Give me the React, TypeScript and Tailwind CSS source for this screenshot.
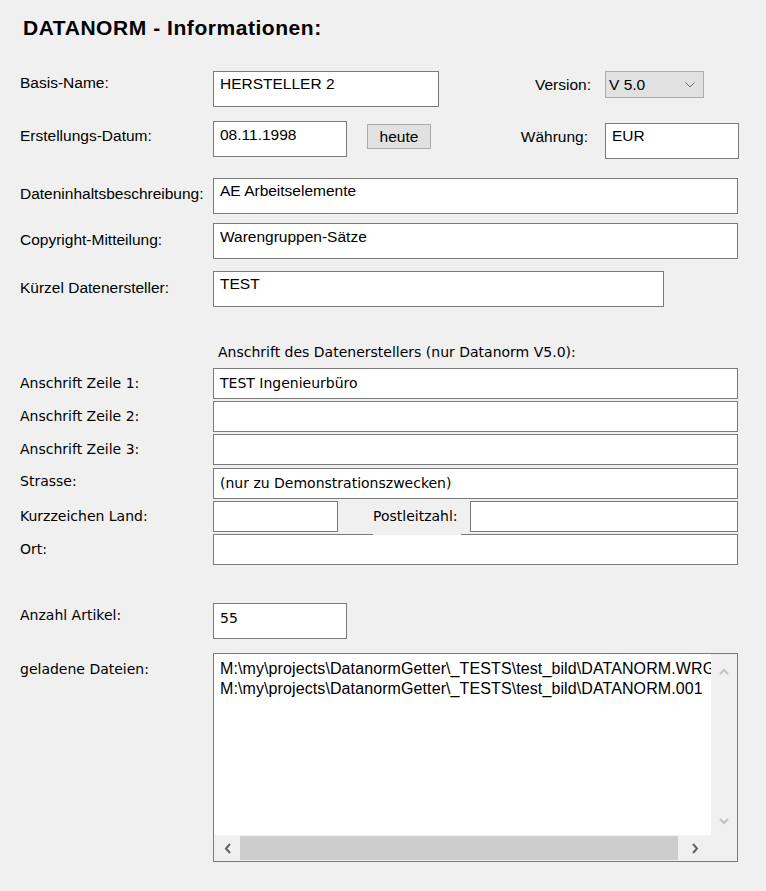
import React from 'react';

const sans = "font-['Liberation_Sans',Arial,sans-serif]";
const tahoma = "font-['DejaVu_Sans',Verdana,sans-serif]";

function Box({ w, h, text, pt = 3, className = '', children }: { w: number; h: number; text?: string; pt?: number; className?: string; children?: React.ReactNode }) {
  return (
    <div
      className={`relative shrink-0 border border-[#7a7a7a] bg-white pl-[6px] text-black whitespace-nowrap ${className}`}
      style={{ width: w, height: h, paddingTop: pt }}
    >
      {text}
      {children}
    </div>
  );
}

function Label({ pt = 0, className = '', children }: { pt?: number; className?: string; children: React.ReactNode }) {
  return (
    <div className={`w-[213px] shrink-0 pl-[20px] whitespace-nowrap ${className}`} style={{ paddingTop: pt }}>
      {children}
    </div>
  );
}

function Chevron({ dir, color, className = '' }: { dir: 'up' | 'down' | 'left' | 'right'; color: string; className?: string }) {
  const pts = {
    up: '1,6 5,2 9,6',
    down: '1,2 5,6 9,2',
    left: '6,1 2,5.5 6,10',
    right: '2,1 6,5.5 2,10',
  }[dir];
  const vb = dir === 'up' || dir === 'down' ? '0 0 10 8' : '0 0 8 11';
  const size = dir === 'up' || dir === 'down' ? 'w-[10px] h-[8px]' : 'w-[8px] h-[11px]';
  return (
    <svg viewBox={vb} className={`${size} ${className}`}>
      <polyline points={pts} fill="none" stroke={color} strokeWidth="2" />
    </svg>
  );
}

export default function App() {
  return (
    <div className={`w-[766px] h-[891px] bg-[#f0f0f0] overflow-hidden text-black ${sans}`}>
      <h1 className="pl-[23px] pt-[16px] text-[21px] leading-[24px] font-bold tracking-[0.55px]">
        DATANORM - Informationen:
      </h1>

      {/* obere Felder */}
      <div className="text-[15.5px] leading-[18px]">
        <div className="flex h-[36px] mt-[31px]">
          <Label pt={3}>Basis-Name:</Label>
          <Box w={226} h={36} text="HERSTELLER 2" />
          <div className="w-[166px] shrink-0 text-right pr-[14px] pt-[5px]">Version:</div>
          <div className="w-[99px] h-[27px] shrink-0 border border-[#adadad] bg-[#e1e1e1] flex items-center justify-between pl-[3px] pr-[8px]">
            <span className="pt-[1px]">V 5.0</span>
            <svg viewBox="0 0 10 6" className="w-[10px] h-[6px]">
              <polyline points="0.5,0.5 5,5 9.5,0.5" fill="none" stroke="#6d6d6d" strokeWidth="1" />
            </svg>
          </div>
        </div>

        <div className="flex h-[37px] mt-[14px]">
          <Label pt={6}>Erstellungs-Datum:</Label>
          <Box w={134} h={36} text="08.11.1998" pt={4} />
          <div className="ml-[20px] mt-[3px] w-[64px] h-[25px] shrink-0 border border-[#adadad] bg-[#e1e1e1] flex items-center justify-center">
            heute
          </div>
          <div className="w-[174px] shrink-0 text-right pr-[17px] pt-[7px]">Währung:</div>
          <div className="mt-[2px]">
            <Box w={134} h={36} text="EUR" pt={3} />
          </div>
        </div>

        <div className="flex h-[36px] mt-[20px]">
          <Label pt={7}>Dateninhaltsbeschreibung:</Label>
          <Box w={525} h={36} text="AE Arbeitselemente" />
        </div>

        <div className="flex h-[36px] mt-[9px]">
          <Label pt={8}>Copyright-Mitteilung:</Label>
          <Box w={525} h={36} text="Warengruppen-Sätze" pt={4} />
        </div>

        <div className="flex h-[36px] mt-[12px]">
          <Label pt={8}>Kürzel Datenersteller:</Label>
          <Box w={451} h={36} text="TEST" />
        </div>
      </div>

      {/* Anschrift */}
      <div className={`${tahoma} text-[14px] leading-[17px]`}>
        <div className="mt-[37px] pl-[218px]">Anschrift des Datenerstellers (nur Datanorm V5.0):</div>

        <div className="flex items-center h-[31px] mt-[7px]">
          <Label>Anschrift Zeile 1:</Label>
          <Box w={525} h={31} text="TEST Ingenieurbüro" pt={6} />
        </div>
        <div className="flex items-center h-[31px] mt-[2px]">
          <Label>Anschrift Zeile 2:</Label>
          <Box w={525} h={31} />
        </div>
        <div className="flex items-center h-[31px] mt-[2px]">
          <Label>Anschrift Zeile 3:</Label>
          <Box w={525} h={31} />
        </div>
        <div className="flex items-center h-[31px] mt-[3px]">
          <Label className="mb-[4px]">Strasse:</Label>
          <Box w={525} h={31} text="(nur zu Demonstrationszwecken)" pt={6} />
        </div>
        <div className="flex items-center h-[31px] mt-[2px]">
          <Label>Kurzzeichen Land:</Label>
          <Box w={125} h={31} />
          <div className="w-[132px] shrink-0 pl-[35px]">Postleitzahl:</div>
          <Box w={268} h={31} />
        </div>
        <div className="flex items-center h-[31px] mt-[2px]">
          <Label>Ort:</Label>
          <Box w={525} h={31}>
            <div className="absolute top-[-1px] left-[159px] w-[88px] h-[1px] bg-[#f0f0f0]" />
          </Box>
        </div>

        <div className="flex h-[36px] mt-[38px]">
          <Label pt={4}>Anzahl Artikel:</Label>
          <Box w={134} h={36} text="55" pt={6} />
        </div>

        <div className="flex mt-[14px]">
          <Label pt={8}>geladene Dateien:</Label>
          <div className="w-[525px] h-[209px] shrink-0 border border-[#7a7a7a] bg-white grid grid-cols-[1fr_26px] grid-rows-[1fr_26px]">
            <div className={`${sans} text-[16px] leading-[20px] tracking-[0.1px] pl-[6px] pt-[5px] overflow-hidden whitespace-nowrap`}>
              <div>M:\my\projects\DatanormGetter\_TESTS\test_bild\DATANORM.WRG</div>
              <div>M:\my\projects\DatanormGetter\_TESTS\test_bild\DATANORM.001</div>
            </div>
            <div className="row-span-2 bg-[#f0f0f0] flex flex-col items-center justify-between pt-[14px] pb-[36px]">
              <Chevron dir="up" color="#c2c2c2" />
              <Chevron dir="down" color="#c2c2c2" />
            </div>
            <div className="bg-[#f0f0f0] flex">
              <div className="w-[26px] flex items-center justify-center pl-[1px]">
                <Chevron dir="left" color="#606060" />
              </div>
              <div className="w-[438px] my-[1px] bg-[#cdcdcd]" />
              <div className="flex-1 flex items-center justify-center">
                <Chevron dir="right" color="#606060" />
              </div>
            </div>
          </div>
        </div>
      </div>
    </div>
  );
}
